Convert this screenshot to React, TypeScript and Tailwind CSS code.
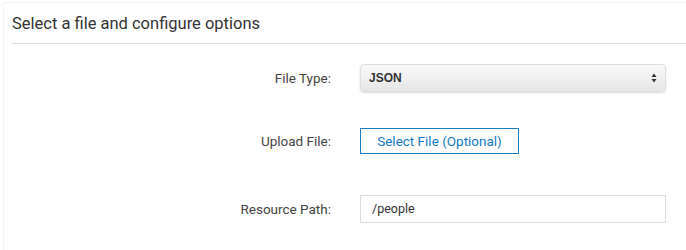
import React from 'react';

const Row: React.FC<{ label: string; className?: string; children: React.ReactNode }> = ({ label, className, children }) => (
  <div className={`flex items-center ${className ?? ''}`}>
    <label className="w-[327px] shrink-0 text-right text-[13.5px] text-[#444]">{label}</label>
    <div className="ml-[29px] flex-1 pr-[20px]">{children}</div>
  </div>
);

export default function App() {
  return (
    <div className="w-[686px] h-[250px] bg-white font-['Roboto',sans-serif] overflow-hidden">
      <div className="mt-[2px] ml-[3px] h-[248px] border-l border-t border-[#f2f2f2]">
        <div className="pl-[8px] pt-[9px] h-[40px] text-[16.5px] text-[#333]">Select a file and configure options</div>
        <div className="ml-[8px] h-px bg-[#dcdcdc]" />

        <Row label="File Type:" className="mt-[20px]">
          <div className="flex h-[28px] items-center justify-between rounded-[4px] border border-[#dedede] bg-gradient-to-b from-[#fafafa] to-[#e6e6e6] pl-[8px] pr-[8px] shadow-[0_1px_2px_rgba(0,0,0,0.15)]">
            <span className="font-['Liberation_Sans',sans-serif] text-[12px] font-bold text-[#333]">JSON</span>
            <svg width="6" height="10" viewBox="0 0 6 10">
              <path d="M3 0.5 L5.5 4 H0.5 Z" fill="#333" />
              <path d="M3 9.5 L5.5 6 H0.5 Z" fill="#333" />
            </svg>
          </div>
        </Row>

        <Row label="Upload File:" className="mt-[36px]">
          <button className="h-[26px] w-[159px] border border-[#1a7dc4] bg-white text-[13.5px] text-[#1478c2]">
            Select File (Optional)
          </button>
        </Row>

        <Row label="Resource Path:" className="mt-[41px]">
          <div className="flex h-[28px] items-center border border-[#dcdcdc] bg-white pl-[11px] text-[12.5px] text-[#333]">
            /people
          </div>
        </Row>
      </div>
    </div>
  );
}
